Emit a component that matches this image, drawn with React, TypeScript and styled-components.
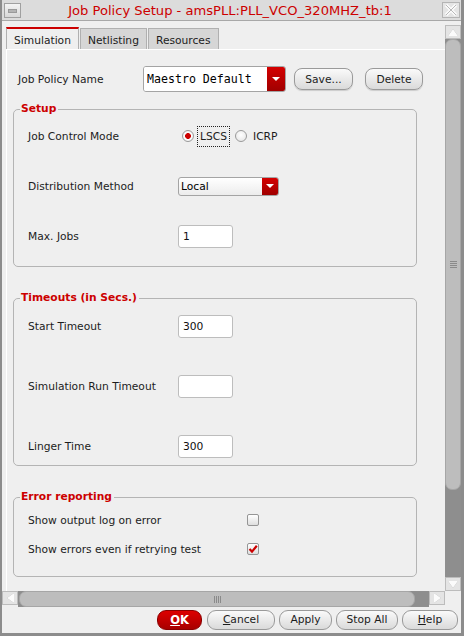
import styled, { createGlobalStyle } from "styled-components";

const GlobalStyle = createGlobalStyle`
  html, body {
    margin: 0;
    padding: 0;
    background: #efefef;
    overflow: hidden;
  }
  body {
    font-family: "DejaVu Sans", sans-serif;
    font-size: 10.7px;
    color: #1c1c1c;
  }
  * {
    box-sizing: border-box;
  }
`;

const RED = "#cc0000";

export default function App() {
  return (
    <>
      <GlobalStyle />
      <Window>
        <TitleBar>
          <MinButton />
          <Title>Job Policy Setup - amsPLL:PLL_VCO_320MHZ_tb:1</Title>
          <CloseButton>
            <svg width="14" height="14" viewBox="0 0 14 14">
              <path d="M2 2 L12 12 M12 2 L2 12" stroke="#fafafa" strokeWidth="3.2" />
              <path d="M2 2 L12 12 M12 2 L2 12" stroke="#b8b8b8" strokeWidth="1" />
            </svg>
          </CloseButton>
        </TitleBar>

        <Body>
          <Main>
            <Tabs>
              <Tab $active>Simulation</Tab>
              <Tab>Netlisting</Tab>
              <Tab>Resources</Tab>
            </Tabs>
            <Panel>
              <TopRow>
                <Label $width={125}>Job Policy Name</Label>
                <Combo $width={143} $height={26}>
                  <ComboText $mono>Maestro Default</ComboText>
                  <ComboArrow $width={18}>
                    <Triangle />
                  </ComboArrow>
                </Combo>
                <PillButton $width={59} $before={8}>
                  Save...
                </PillButton>
                <PillButton $width={58} $before={12}>
                  Delete
                </PillButton>
              </TopRow>

              <Group $gap={26} $padTop={8} $padBottom={18}>
                <Legend>Setup</Legend>
                <Row>
                  <Label $width={150}>Job Control Mode</Label>
                  <RadioGroup>
                    <Radio $checked />
                    <RadioLabel $focused>LSCS</RadioLabel>
                    <Radio />
                    <RadioLabel>ICRP</RadioLabel>
                  </RadioGroup>
                </Row>
                <Row>
                  <Label $width={150}>Distribution Method</Label>
                  <Combo $width={101} $height={19}>
                    <ComboText>Local</ComboText>
                    <ComboArrow $width={16}>
                      <Triangle />
                    </ComboArrow>
                  </Combo>
                </Row>
                <Row>
                  <Label $width={150}>Max. Jobs</Label>
                  <TextInput>1</TextInput>
                </Row>
              </Group>

              <Group $gap={36} $padTop={9} $padBottom={7} $marginTop={24}>
                <Legend>Timeouts (in Secs.)</Legend>
                <Row>
                  <Label $width={150}>Start Timeout</Label>
                  <TextInput>300</TextInput>
                </Row>
                <Row>
                  <Label $width={150}>Simulation Run Timeout</Label>
                  <TextInput />
                </Row>
                <Row>
                  <Label $width={150}>Linger Time</Label>
                  <TextInput>300</TextInput>
                </Row>
              </Group>

              <Group $gap={5} $padTop={4} $padBottom={15} $marginTop={24}>
                <Legend>Error reporting</Legend>
                <Row>
                  <Label $width={219}>Show output log on error</Label>
                  <Checkbox />
                </Row>
                <Row>
                  <Label $width={219}>Show errors even if retrying test</Label>
                  <Checkbox>
                    <svg width="10" height="10" viewBox="0 0 10 10">
                      <path d="M1.5 5 L4 7.6 L8.8 1.8" fill="none" stroke={RED} strokeWidth="2.2" />
                    </svg>
                  </Checkbox>
                </Row>
              </Group>
            </Panel>
          </Main>

          <VScroll>
            <ArrowBox>
              <ArrowGlyph $dir="up" />
            </ArrowBox>
            <VTrack>
              <VThumb>
                <Grip $vertical />
              </VThumb>
            </VTrack>
            <ArrowBox>
              <ArrowGlyph $dir="down" />
            </ArrowBox>
          </VScroll>

          <HScroll>
            <ArrowBox>
              <ArrowGlyph $dir="left" />
            </ArrowBox>
            <HTrack>
              <HThumb>
                <Grip />
              </HThumb>
            </HTrack>
            <ArrowBox>
              <ArrowGlyph $dir="right" />
            </ArrowBox>
          </HScroll>
          <Corner />
        </Body>

        <ButtonBar>
          <DialogButton $primary $width={45}>
            <u>O</u>K
          </DialogButton>
          <DialogButton $width={68}>
            <u>C</u>ancel
          </DialogButton>
          <DialogButton $width={53}>Apply</DialogButton>
          <DialogButton $width={62}>Stop All</DialogButton>
          <DialogButton $width={56}>
            <u>H</u>elp
          </DialogButton>
        </ButtonBar>
      </Window>
    </>
  );
}

const Window = styled.div`
  width: 464px;
  height: 636px;
  display: flex;
  flex-direction: column;
  background: #efefef;
  border-left: 2px solid #8c8c8c;
  border-right: 3px solid #8c8c8c;
  border-bottom: 3px solid #8c8c8c;
`;

const TitleBar = styled.div`
  height: 21px;
  flex: none;
  display: flex;
  align-items: center;
  padding: 0 1px 0 2px;
  background: #dcdcdc;
  border-bottom: 1px solid #a8a8a8;
`;

const MinButton = styled.div`
  width: 17px;
  height: 15px;
  border: 1px solid #a0a0a0;
  background: linear-gradient(#f4f4f4, #d8d8d8);
  position: relative;
  &::after {
    content: "";
    position: absolute;
    left: 3px;
    right: 3px;
    top: 5px;
    height: 2px;
    background: #b4b4b4;
    border: 1px solid #9a9a9a;
  }
`;

const Title = styled.div`
  flex: 1;
  text-align: center;
  color: ${RED};
  font-size: 13.1px;
  white-space: nowrap;
  padding: 1px 3px 0 0;
`;

const CloseButton = styled.div`
  width: 18px;
  height: 16px;
  border: 1px solid #b4b4b4;
  background: #e4e4e4;
  display: flex;
  align-items: center;
  justify-content: center;
`;

const Body = styled.div`
  flex: 1;
  display: grid;
  grid-template-columns: 1fr 16px;
  grid-template-rows: 1fr 16px;
  min-height: 0;
`;

const Main = styled.div`
  display: flex;
  flex-direction: column;
  padding-top: 6px;
  min-height: 0;
  overflow: hidden;
`;

const Tabs = styled.div`
  display: flex;
  align-items: flex-end;
  padding-left: 4px;
  height: 22px;
  flex: none;
`;

const Tab = styled.div<{ $active?: boolean }>`
  height: ${(p) => (p.$active ? "22px" : "21px")};
  padding: 2px 7px 0;
  display: flex;
  align-items: center;
  border: 1px solid #b0b0b0;
  border-bottom: none;
  border-top: ${(p) => (p.$active ? `2px solid ${RED}` : "1px solid #b0b0b0")};
  background: ${(p) => (p.$active ? "#efefef" : "#d6d6d6")};
  margin-right: 1px;
`;

const Panel = styled.div`
  flex: 1;
  margin-left: 4px;
  border-top: 1px solid #ffffff;
  border-left: 1px solid #ffffff;
  padding: 16px 0 0 11px;
  overflow: hidden;
`;

const TopRow = styled.div`
  display: flex;
  align-items: center;
  height: 26px;
`;

const Label = styled.div<{ $width: number }>`
  width: ${(p) => p.$width}px;
  flex: none;
  white-space: nowrap;
`;

const Combo = styled.div<{ $width: number; $height: number }>`
  width: ${(p) => p.$width}px;
  height: ${(p) => p.$height}px;
  display: flex;
  border: 1px solid #a4a4a4;
  border-radius: 3px;
  background: linear-gradient(#ffffff, #ececec);
  overflow: hidden;
  flex: none;
`;

const ComboText = styled.div<{ $mono?: boolean }>`
  flex: 1;
  display: flex;
  align-items: center;
  padding-left: ${(p) => (p.$mono ? "3px" : "2px")};
  background: ${(p) => (p.$mono ? "#ffffff" : "transparent")};
  font-family: ${(p) => (p.$mono ? '"DejaVu Sans Mono", monospace' : "inherit")};
  font-size: ${(p) => (p.$mono ? "11.6px" : "inherit")};
  color: #000;
`;

const ComboArrow = styled.div<{ $width: number }>`
  width: ${(p) => p.$width}px;
  background: linear-gradient(#d40000, #a00000);
  display: flex;
  align-items: center;
  justify-content: center;
`;

const Triangle = styled.div`
  width: 0;
  height: 0;
  border-left: 4px solid transparent;
  border-right: 4px solid transparent;
  border-top: 4px solid #ffffff;
`;

const PillButton = styled.div<{ $width: number; $before: number }>`
  width: ${(p) => p.$width}px;
  height: 22px;
  margin-left: ${(p) => p.$before}px;
  display: flex;
  align-items: center;
  justify-content: center;
  border: 1px solid #9a9a9a;
  border-radius: 8px;
  background: linear-gradient(#fafafa, #dadada);
  box-shadow: 0 1px 1px rgba(0, 0, 0, 0.15);
  color: #1c1c1c;
`;

const Group = styled.fieldset<{
  $gap: number;
  $padTop: number;
  $padBottom: number;
  $marginTop?: number;
}>`
  width: 404px;
  margin: ${(p) => p.$marginTop ?? 10}px 0 0 -5px;
  padding: ${(p) => p.$padTop}px 0 ${(p) => p.$padBottom}px 14px;
  border: 1px solid #b4b4b4;
  border-radius: 5px;
  display: flex;
  flex-direction: column;
  gap: ${(p) => p.$gap}px;
`;

const Legend = styled.legend`
  color: ${RED};
  font-weight: bold;
  line-height: 14px;
  padding: 0 2px 0 1px;
  margin-left: -8px;
`;

const Row = styled.div`
  display: flex;
  align-items: center;
  height: 24px;
`;

const RadioGroup = styled.div`
  display: flex;
  align-items: center;
  margin-left: 4px;
`;

const Radio = styled.div<{ $checked?: boolean }>`
  width: 12px;
  height: 12px;
  border-radius: 50%;
  border: 1px solid #9a9a9a;
  background: ${(p) =>
    p.$checked
      ? `radial-gradient(circle, ${RED} 0 2.6px, #ffffff 3.2px, #e2e2e2 100%)`
      : "radial-gradient(circle at 50% 40%, #ffffff 0, #e2e2e2 100%)"};
`;

const RadioLabel = styled.div<{ $focused?: boolean }>`
  margin: 0 3px 0 3px;
  padding: 3px 2px;
  border: 1px dotted ${(p) => (p.$focused ? "#222" : "transparent")};
  margin-right: ${(p) => (p.$focused ? "5px" : "0")};
`;

const TextInput = styled.div`
  width: 55px;
  height: 23px;
  border: 1px solid #bdbdbd;
  border-radius: 3px;
  background: #ffffff;
  display: flex;
  align-items: center;
  padding-left: 4px;
  color: #111;
`;

const Checkbox = styled.div`
  width: 12px;
  height: 12px;
  border: 1px solid #959595;
  border-radius: 2px;
  background: linear-gradient(#ffffff, #dedede);
  display: flex;
  align-items: center;
  justify-content: center;
`;

const VScroll = styled.div`
  grid-row: 1;
  grid-column: 2;
  display: flex;
  flex-direction: column;
  padding-top: 4px;
  background: #efefef;
`;

const HScroll = styled.div`
  grid-row: 2;
  grid-column: 1;
  display: flex;
`;

const Corner = styled.div`
  grid-row: 2;
  grid-column: 2;
  background: #efefef;
`;

const ArrowBox = styled.div`
  width: 16px;
  height: 14px;
  flex: none;
  background: #e4e4e4;
  border: 1px solid #bcbcbc;
  display: flex;
  align-items: center;
  justify-content: center;
`;

const ArrowGlyph = styled.div<{ $dir: "up" | "down" | "left" | "right" }>`
  width: 0;
  height: 0;
  ${(p) =>
    p.$dir === "up"
      ? "border-left: 5px solid transparent; border-right: 5px solid transparent; border-bottom: 7px solid #fbfbfb;"
      : p.$dir === "down"
      ? "border-left: 5px solid transparent; border-right: 5px solid transparent; border-top: 7px solid #fbfbfb;"
      : p.$dir === "left"
      ? "border-top: 5px solid transparent; border-bottom: 5px solid transparent; border-right: 7px solid #fbfbfb;"
      : "border-top: 5px solid transparent; border-bottom: 5px solid transparent; border-left: 7px solid #fbfbfb;"}
  filter: drop-shadow(0 0 0.6px #9c9c9c);
`;

const VTrack = styled.div`
  flex: 1;
  background: #8e8e8e;
  display: flex;
  flex-direction: column;
`;

const VThumb = styled.div`
  height: 451px;
  background: #bdbdbd;
  border: 1px solid #a6a6a6;
  border-radius: 7px;
  display: flex;
  align-items: center;
  justify-content: center;
`;

const HTrack = styled.div`
  flex: 1;
  background: #8e8e8e;
  display: flex;
`;

const HThumb = styled.div`
  width: 396px;
  margin-left: 1px;
  background: #bdbdbd;
  border: 1px solid #a6a6a6;
  border-radius: 7px;
  display: flex;
  align-items: center;
  justify-content: center;
`;

const Grip = styled.div<{ $vertical?: boolean }>`
  width: 7px;
  height: 7px;
  background: ${(p) =>
    p.$vertical
      ? "repeating-linear-gradient(#8a8a8a 0 1px, transparent 1px 2px)"
      : "repeating-linear-gradient(90deg, #8a8a8a 0 1px, transparent 1px 2px)"};
`;

const ButtonBar = styled.div`
  height: 26px;
  flex: none;
  display: flex;
  justify-content: flex-end;
  align-items: center;
  gap: 4px;
  padding: 0 3px 1px 0;
`;

const DialogButton = styled.div<{ $primary?: boolean; $width: number }>`
  width: ${(p) => p.$width}px;
  height: 20px;
  display: flex;
  align-items: center;
  justify-content: center;
  border-radius: 9px;
  border: 1px solid ${(p) => (p.$primary ? "#8a0000" : "#9a9a9a")};
  background: ${(p) =>
    p.$primary ? "linear-gradient(#dd0000, #a80000)" : "linear-gradient(#fafafa, #dadada)"};
  color: ${(p) => (p.$primary ? "#ffffff" : "#1c1c1c")};
  font-weight: ${(p) => (p.$primary ? "bold" : "normal")};
  font-size: ${(p) => (p.$primary ? "11.5px" : "10.7px")};
  margin-right: ${(p) => (p.$primary ? "1px" : "0")};
`;
